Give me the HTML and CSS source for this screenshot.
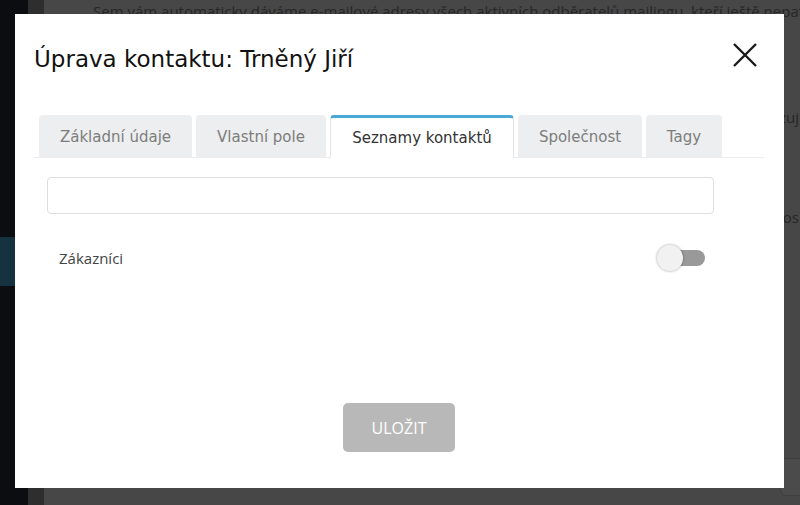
FILE: index.html
```html
<!DOCTYPE html>
<html lang="cs">
<head>
<meta charset="utf-8">
<title>Úprava kontaktu</title>
<link rel="stylesheet" href="styles.css">
</head>
<body>
<div class="page">
  <aside class="sidebar"><div class="sidebar-active"></div></aside>
  <div class="strip"></div>
  <main class="content">
    <p class="bg-line first">Sem vám automaticky dáváme e-mailové adresy všech aktivních odběratelů mailingu, kteří ještě nepatří</p>
    <p class="bg-line second">Zde si můžete vytvořit vlastní seznam kontaktů, který se automaticky aktualizuj</p>
    <p class="bg-line third">Seznam můžete kdykoliv upravit nebo smazat a znovu vytvořit podle potřeby, kontakty se přidávají postupně pos</p>
    <div class="bg-btn"></div>
  </main>
</div>

<div class="modal">
  <div class="modal-header">
    <h1 class="modal-title">Úprava kontaktu: Trněný Jiří</h1>
    <button class="close" aria-label="Zavřít">
      <svg width="26" height="26" viewBox="0 0 26 26"><path d="M2 2 L24 24 M24 2 L2 24" stroke="#1a1a1a" stroke-width="2.4" fill="none"/></svg>
    </button>
  </div>
  <nav class="tabs">
    <a class="tab t1">Základní údaje</a>
    <a class="tab t2">Vlastní pole</a>
    <a class="tab t3 active">Seznamy kontaktů</a>
    <a class="tab t4">Společnost</a>
    <a class="tab t5">Tagy</a>
  </nav>
  <div class="panel">
    <input class="search" type="text">
    <div class="list-row">
      <span class="list-name">Zákazníci</span>
      <span class="toggle"><span class="track"></span><span class="knob"></span></span>
    </div>
  </div>
  <div class="footer">
    <button class="save">ULOŽIT</button>
  </div>
</div>
</body>
</html>
```

FILE: styles.css
```css
* { box-sizing: border-box; }
html, body { margin: 0; padding: 0; }
body {
  width: 800px;
  height: 505px;
  overflow: hidden;
  position: relative;
  background: #474747;
  font-family: "Open Sans", "DejaVu Sans", sans-serif;
}
.page {
  display: flex;
  height: 505px;
}
.sidebar {
  width: 28px;
  background: #0b0d10;
  padding-top: 237px;
}
.sidebar-active {
  width: 15px;
  height: 49px;
  background: #16313f;
}
.strip {
  width: 16px;
  background: #2e2e2e;
}
.content {
  flex: 1;
  position: relative;
  overflow: hidden;
  padding-left: 49px;
}
.bg-line {
  margin: 0;
  white-space: nowrap;
  font-size: 15px;
  color: #262626;
  line-height: 20px;
}
.bg-line.first { margin-top: 1px; }
.bg-line.second,
.bg-line.third {
  display: flex;
  justify-content: flex-end;
  margin-right: 1px;
}
.bg-line.second { margin-top: 86px; }
.bg-line.third { margin-top: 80px; }
.bg-btn {
  position: absolute;
  right: -20px;
  top: 458px;
  width: 40px;
  height: 38px;
  border-radius: 6px;
  background: #4b4b4b;
  border: 1px solid #3f3f3f;
}

.modal {
  position: absolute;
  left: 15px;
  top: 14px;
  width: 769px;
  height: 474px;
  background: #fff;
  display: flex;
  flex-direction: column;
}
.modal-header {
  display: flex;
  align-items: center;
  justify-content: space-between;
  padding: 28px 26px 0 19px;
  height: 62px;
}
.modal-title {
  margin: 0;
  font-family: "DejaVu Sans", Verdana, sans-serif;
  font-weight: normal;
  font-size: 23px;
  color: #111;
}
.close {
  border: 0;
  background: none;
  padding: 0;
  width: 26px;
  height: 26px;
  display: block;
  margin-top: -8px;
}
.close svg { display: block; }

.tabs {
  display: flex;
  gap: 4px;
  margin: 39px 20px 0 19px;
  padding-left: 5px;
  border-bottom: 1px solid #ececec;
  height: 43px;
}
.tab {
  display: flex;
  align-items: center;
  justify-content: center;
  height: 42px;
  background: #eceeef;
  border-radius: 4px 4px 0 0;
  font-family: "DejaVu Sans", Verdana, sans-serif;
  font-size: 15px;
  color: #7d7d7d;
  padding-top: 1px;
}
.t1 { width: 153px; }
.t2 { width: 130px; }
.t3 { width: 184px; }
.t4 { width: 124px; }
.t5 { width: 76px; }
.tab.active {
  background: #fff;
  color: #333;
  border-top: 3px solid #4aa8d9;
  border-left: 1px solid #e6e6e6;
  border-right: 1px solid #e6e6e6;
  height: 43px;
  padding-top: 0;
}

.panel {
  padding: 19px 70px 0 32px;
}
.search {
  display: block;
  width: 667px;
  height: 37px;
  border: 1px solid #dedede;
  border-radius: 4px;
  background: #fff;
  margin: 0;
}
.list-row {
  display: flex;
  align-items: center;
  justify-content: space-between;
  width: 667px;
  height: 30px;
  margin-top: 29px;
  padding: 0 9px 0 12px;
}
.list-name {
  font-size: 15px;
  color: #444;
}
.toggle {
  position: relative;
  width: 48px;
  height: 26px;
  display: block;
}
.track {
  position: absolute;
  left: 13px;
  top: 5px;
  width: 35px;
  height: 16px;
  border-radius: 8px;
  background: #999;
}
.knob {
  position: absolute;
  left: 0;
  top: 0;
  width: 26px;
  height: 26px;
  border-radius: 50%;
  background: #f1f1f1;
  box-shadow: 0 0 2px 1px rgba(0,0,0,0.18);
}

.footer {
  display: flex;
  justify-content: center;
  margin-top: 130px;
  padding-right: 1px;
}
.save {
  width: 112px;
  height: 49px;
  border: 0;
  border-radius: 5px;
  background: #b8b8b8;
  color: #fff;
  font-family: "Open Sans", sans-serif;
  font-size: 16px;
  font-weight: 500;
  padding: 0;
}
```
